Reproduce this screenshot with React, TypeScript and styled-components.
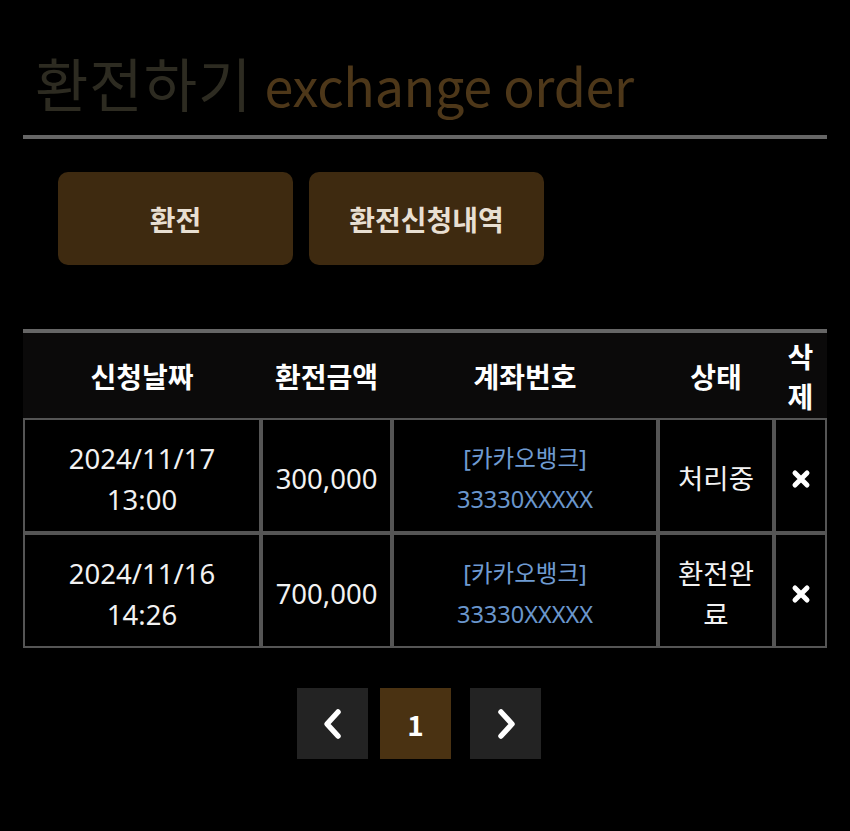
import React from "react";
import styled, { createGlobalStyle } from "styled-components";

const GlobalStyle = createGlobalStyle`
  html, body {
    margin: 0;
    padding: 0;
    background: #000;
  }
  body {
    font-family: "Noto Sans CJK KR", "Noto Sans", sans-serif;
  }
`;

const Page = styled.div`
  width: 850px;
  min-height: 831px;
  box-sizing: border-box;
  padding: 0 23px;
  background: #000;
`;

const Title = styled.h1`
  margin: 0;
  padding: 48px 0 0 12px;
  height: 68px;
  font-size: 58px;
  line-height: 68px;
  font-weight: 400;
  color: #2d2b21;
  letter-spacing: 1px;
  white-space: nowrap;
`;

const TitleSub = styled.span`
  color: #4d3719;
  font-size: 52px;
  line-height: 1;
  letter-spacing: -0.3px;
  margin-left: 12px;
`;

const Divider = styled.div`
  height: 4px;
  margin-top: 19px;
  background: #666;
`;

const ButtonRow = styled.div`
  display: flex;
  gap: 16px;
  padding-left: 35px;
  margin-top: 33px;
`;

const TabButton = styled.button`
  width: 235px;
  height: 93px;
  border: none;
  border-radius: 10px;
  background: #3e2a10;
  color: #e8dfd2;
  font-family: "Noto Sans CJK KR", sans-serif;
  font-size: 28px;
  font-weight: 700;
  cursor: pointer;
`;

const Table = styled.table`
  margin-top: 64px;
  width: 804px;
  table-layout: fixed;
  border-collapse: separate;
  border-spacing: 0;
`;

const HeadCell = styled.th`
  border-top: 4px solid #666;
  background: #0b0a0a;
  height: 85px;
  padding: 0 3px;
  color: #fff;
  font-family: "Noto Sans CJK KR", sans-serif;
  font-size: 28px;
  font-weight: 700;
  line-height: 40px;
  text-align: center;
  vertical-align: middle;
  word-break: break-all;
`;

const Cell = styled.td`
  border: 2px solid #555;
  height: 115px;
  box-sizing: border-box;
  padding: 6px 6px 0;
  color: #f2f2f2;
  font-family: "Noto Sans", "Noto Sans CJK KR", sans-serif;
  font-size: 27.5px;
  line-height: 41px;
  text-align: center;
  vertical-align: middle;
  word-break: break-all;
`;

const BankLine = styled.div<{ $top?: boolean }>`
  color: ${(p) => (p.$top ? "#6f9bd2" : "#6a96cc")};
  font-size: 23.5px;
  line-height: 41px;
`;

const DeleteButton = styled.button`
  border: none;
  background: transparent;
  padding: 0;
  display: inline-flex;
  align-items: center;
  justify-content: center;
  cursor: pointer;
`;

const Pager = styled.div`
  display: flex;
  justify-content: center;
  gap: 12px;
  margin-top: 40px;
  padding-right: 12px;
`;

const PageBox = styled.button<{ $active?: boolean; $extra?: number }>`
  width: 71px;
  height: 71px;
  border: none;
  padding: 0;
  margin-left: ${(p) => p.$extra ?? 0}px;
  background: ${(p) => (p.$active ? "#4a3212" : "#232323")};
  color: #fff;
  font-family: "Noto Sans CJK KR", sans-serif;
  font-size: 28px;
  font-weight: 700;
  display: flex;
  align-items: center;
  justify-content: center;
  cursor: pointer;
`;

const XIcon = () => (
  <svg width="20" height="20" viewBox="0 0 20 20">
    <path
      d="M4 4 L16 16 M16 4 L4 16"
      stroke="#fff"
      strokeWidth="5"
      strokeLinecap="round"
      fill="none"
    />
  </svg>
);

const Chevron = ({ dir }: { dir: "left" | "right" }) => (
  <svg width="22" height="32" viewBox="0 0 22 32">
    <polyline
      points={dir === "left" ? "16,4 5,16 16,28" : "6,4 17,16 6,28"}
      stroke="#fff"
      strokeWidth="5.5"
      strokeLinecap="round"
      strokeLinejoin="round"
      fill="none"
    />
  </svg>
);

const rows = [
  { date: "2024/11/17", time: "13:00", amount: "300,000", status: "처리중" },
  { date: "2024/11/16", time: "14:26", amount: "700,000", status: "환전완료" },
];

export default function App() {
  return (
    <>
      <GlobalStyle />
      <Page>
        <Title>
          환전하기<TitleSub>exchange order</TitleSub>
        </Title>
        <Divider />
        <ButtonRow>
          <TabButton>환전</TabButton>
          <TabButton>환전신청내역</TabButton>
        </ButtonRow>
        <Table>
          <colgroup>
            <col style={{ width: 238 }} />
            <col style={{ width: 131 }} />
            <col style={{ width: 266 }} />
            <col style={{ width: 116 }} />
            <col style={{ width: 53 }} />
          </colgroup>
          <thead>
            <tr>
              <HeadCell>신청날짜</HeadCell>
              <HeadCell>환전금액</HeadCell>
              <HeadCell>계좌번호</HeadCell>
              <HeadCell>상태</HeadCell>
              <HeadCell>삭제</HeadCell>
            </tr>
          </thead>
          <tbody>
            {rows.map((r) => (
              <tr key={r.date}>
                <Cell>
                  {r.date}
                  <br />
                  {r.time}
                </Cell>
                <Cell>{r.amount}</Cell>
                <Cell>
                  <BankLine $top>[카카오뱅크]</BankLine>
                  <BankLine>33330XXXXX</BankLine>
                </Cell>
                <Cell>{r.status}</Cell>
                <Cell>
                  <DeleteButton aria-label="삭제">
                    <XIcon />
                  </DeleteButton>
                </Cell>
              </tr>
            ))}
          </tbody>
        </Table>
        <Pager>
          <PageBox aria-label="이전">
            <Chevron dir="left" />
          </PageBox>
          <PageBox $active>1</PageBox>
          <PageBox aria-label="다음" $extra={7}>
            <Chevron dir="right" />
          </PageBox>
        </Pager>
      </Page>
    </>
  );
}
